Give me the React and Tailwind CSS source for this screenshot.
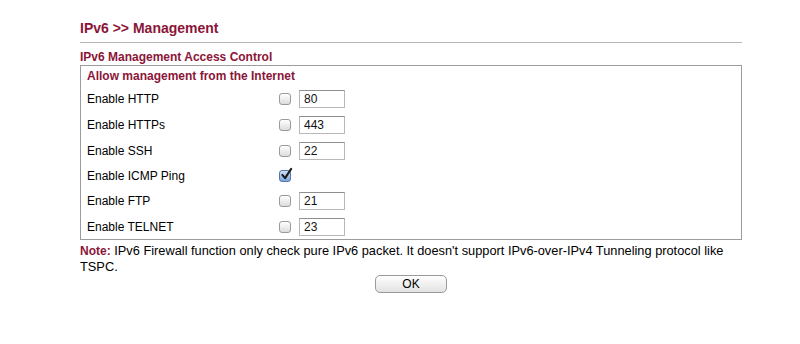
import React from "react";

const rows = [
  { label: "Enable HTTP", port: "80", checked: false },
  { label: "Enable HTTPs", port: "443", checked: false },
  { label: "Enable SSH", port: "22", checked: false },
  { label: "Enable ICMP Ping", port: null, checked: true },
  { label: "Enable FTP", port: "21", checked: false },
  { label: "Enable TELNET", port: "23", checked: false },
];

function MacCheckbox({ checked }) {
  if (checked) {
    return (
      <span className="relative inline-block w-[12px] h-[12px] rounded-[3px] border border-[#5a76a8] bg-gradient-to-b from-[#cfe0f6] to-[#7da6dc]">
        <svg viewBox="0 0 14 14" className="absolute left-[0px] top-[-4px] w-[13px] h-[14px]">
          <path d="M2.5 8 L5.5 11.5 L12 1.5" fill="none" stroke="#1a1a1a" strokeWidth="2.2" strokeLinecap="round" strokeLinejoin="round" />
        </svg>
      </span>
    );
  }
  return (
    <span className="inline-block w-[12px] h-[12px] rounded-[3px] border border-[#9a9a9a] bg-gradient-to-b from-[#ffffff] to-[#dcdcdc]" />
  );
}

export default function App() {
  return (
    <div className="w-[800px] h-[344px] bg-white font-['Liberation_Sans',Arial,sans-serif] text-[12px] leading-[15px] text-black">
      <div className="ml-[80px] w-[662px] pt-[20px]">
        <h1 className="text-[14px] leading-[17px] font-bold text-[#8b1538]">IPv6 &gt;&gt; Management</h1>
        <div className="mt-[5px] h-[1px] bg-[#b4b4b4]" />
        <h2 className="mt-[7px] font-bold text-[#8b1538]">IPv6 Management Access Control</h2>
        <div className="border border-[#9c9c9c] pl-[6px] pt-[3px]">
          <div className="font-bold text-[#8b1538]">Allow management from the Internet</div>
          <div className="mt-[2px] mb-[-1px]">
            {rows.map((r) => (
              <div
                key={r.label}
                className={`grid grid-cols-[192px_20px_1fr] items-center ${r.port ? "h-[26px]" : "h-[24px]"}`}
              >
                <span>{r.label}</span>
                <span className="flex items-center">
                  <MacCheckbox checked={r.checked} />
                </span>
                <span>
                  {r.port && (
                    <span className="inline-flex items-center w-[46px] h-[18px] border border-[#b8b8b8] border-t-[#8e8e8e] pl-[4px] text-[12px] text-[#111]">
                      {r.port}
                    </span>
                  )}
                </span>
              </div>
            ))}
          </div>
        </div>
        <p className="mt-[3px] text-[12.8px] leading-[15px]">
          <b className="text-[12px] leading-[15px] text-[#8b1538]">Note:</b> IPv6 Firewall function only check pure IPv6 packet. It doesn't support IPv6-over-IPv4 Tunneling protocol like TSPC.
        </p>
        <div className="flex justify-center mt-[1px]">
          <button className="w-[72px] h-[18px] rounded-[5px] border border-[#9a9a9a] bg-gradient-to-b from-[#ffffff] to-[#e2e2e2] text-[12px] leading-[16px] text-black">
            OK
          </button>
        </div>
      </div>
    </div>
  );
}
